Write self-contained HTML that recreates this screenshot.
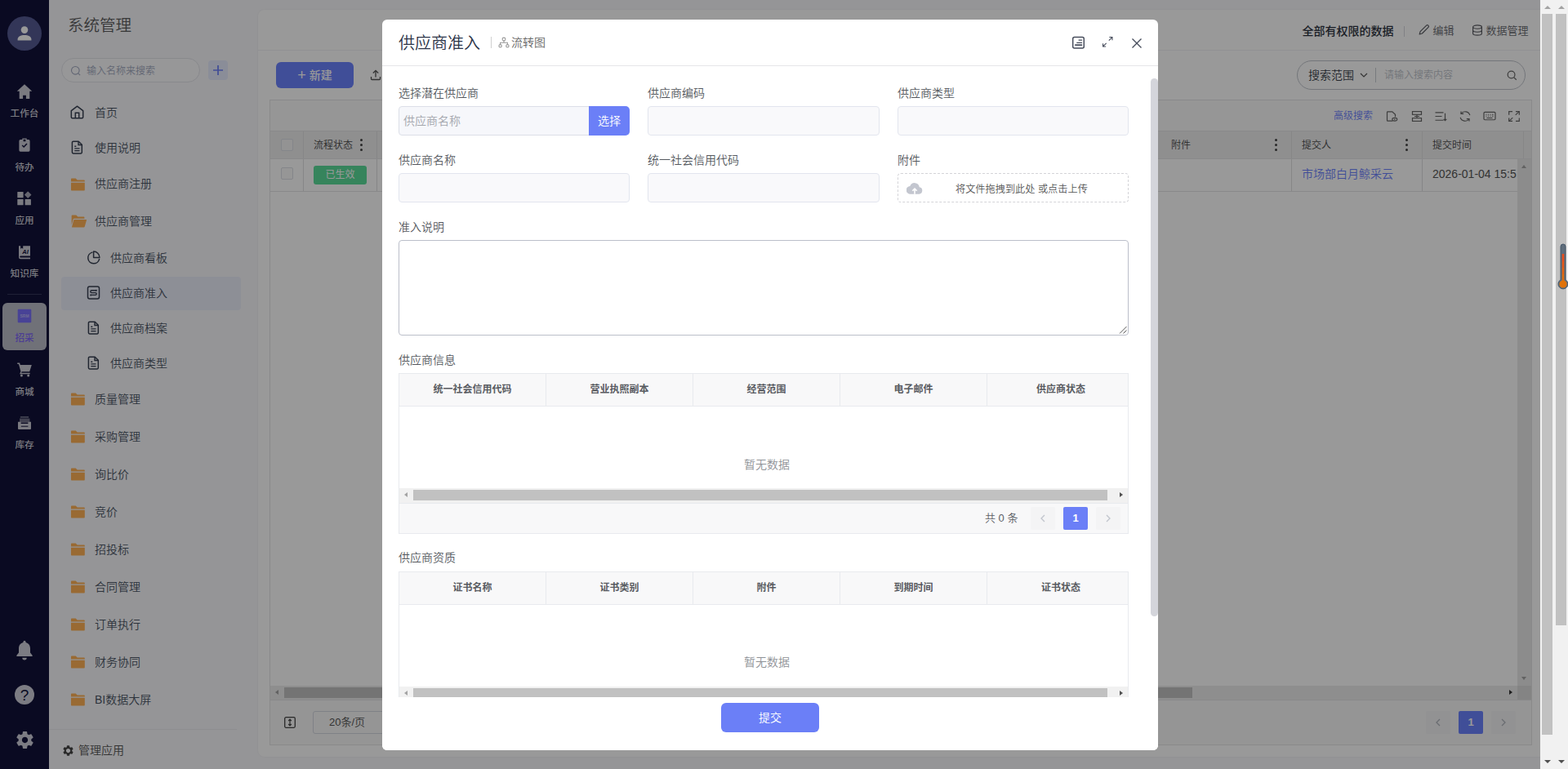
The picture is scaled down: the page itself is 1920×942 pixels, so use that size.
<!DOCTYPE html>
<html lang="zh-CN">
<head>
<meta charset="utf-8">
<title>供应商准入</title>
<style>
*{box-sizing:border-box;margin:0;padding:0}
html,body{width:1920px;height:942px;overflow:hidden;background:#f1f1f1}
body{font-family:"Liberation Sans","Noto Sans CJK SC",sans-serif;font-size:14px;color:#333;position:relative;font-weight:350}
.abs{position:absolute}
svg{display:block}
#page{position:absolute;left:0;top:0;width:1886px;height:942px;background:#f9f9fc;overflow:hidden}
/* rail */
#rail{position:absolute;left:0;top:0;width:60px;height:942px;background:#111239}
.avatar{position:absolute;left:9px;top:20px;width:42px;height:42px;border-radius:50%;background:#555a93}
.ri{position:absolute;left:0;width:60px;text-align:center;color:#cdcdd8;font-size:11.6px;font-weight:500;line-height:14px;white-space:nowrap}
.ri svg{position:absolute;left:20px;top:0}
.ri span{position:absolute;left:0;width:60px;top:29.5px}
/* sidebar */
#side{position:absolute;left:60px;top:0;width:240px;height:942px}
#side h1{position:absolute;left:23px;top:17px;font-size:19.5px;font-weight:350;color:#5c5c5e;line-height:28px}
.sinput{position:absolute;left:15px;top:71px;width:170px;height:30px;border:1px solid #e3e4ea;border-radius:15px;background:#fcfcfe;color:#a3aac0;font-size:12px;line-height:31px;padding-left:30px}
.splus{position:absolute;left:195px;top:74px;width:24px;height:24px;border-radius:4px;background:#e6ebfd}
.mi{position:absolute;left:15px;width:220px;height:41px;line-height:41px;font-size:14px;color:#4b5565;border-radius:4px;white-space:nowrap}
.mi .ic{position:absolute;left:11px;top:11px;width:17px;height:17px}
.mi .tx{position:absolute;left:41px;top:0}
.mi.sub .ic{left:31px}
.mi.sub .tx{left:60px}
.mi.act{background:#eceefb}
/* main */
#card{position:absolute;left:316px;top:12px;width:1600px;height:915px;background:#fff;border-radius:8px;box-shadow:0 0 3px rgba(0,0,0,.06)}
/* overlay */
#mask{position:absolute;left:0;top:0;width:1886px;height:942px;background:rgba(0,0,0,.4)}
/* modal */
#modal{position:absolute;left:468px;top:24px;width:950px;height:895px;background:#fff;border-radius:6px;overflow:hidden}
/* browser scrollbars */
.sb{position:absolute;top:0;width:17px;height:942px;background:#f1f1f1}
.sb .th{position:absolute;left:2px;width:13px;background:#c1c1c1}
.sb .up,.sb .dn{position:absolute;left:4.5px;width:0;height:0;border-left:4px solid transparent;border-right:4px solid transparent}
.sb .up{top:7px;border-bottom:4px solid #a3a3a3}
.sb .dn{bottom:7px;border-top:4px solid #505050}
/* card content: coordinates relative to card (316,12) */
#card .t{position:absolute;white-space:nowrap}
.btn-new{position:absolute;left:22px;top:64px;width:95px;height:32px;border-radius:6px;background:#6c82fd;color:#fff;font-size:14px;font-weight:500;line-height:32px;text-align:center;white-space:nowrap}
.sbox{position:absolute;left:1272px;top:62px;width:280px;height:36px;border:1px solid #c0c4cc;border-radius:18px}
.tbl{position:absolute;left:14px;top:110px;width:1546px;height:791px;border:1px solid #e4e4e6;background:#fff;overflow:hidden}
.tbl .bar{position:absolute;left:0;top:0;width:1544px;height:37px;background:#fbfbfb}
.tbl .hd{position:absolute;left:0;top:37px;width:1544px;height:35px;background:#eeeeef;border-top:1px solid #e4e4e6;border-bottom:1px solid #e4e4e6;font-size:12px;color:#4a4a4a}
.tbl .row{position:absolute;left:0;top:72px;width:1544px;height:40px;border-bottom:1px solid #e4e4e6;background:#fff}
.tbl .vl{position:absolute;top:0;width:1px;height:100%;background:#dfdfe1}
.cb{position:absolute;width:15px;height:15px;border:1px solid #dcdfe6;border-radius:2px;background:#fafafa}
.dots{position:absolute;width:3px;height:15px}
.dots i{position:absolute;left:0;width:3px;height:3px;border-radius:50%;background:#444}
.pg{position:absolute;width:30px;height:28px;border-radius:2px;background:#f4f4f5;text-align:center;line-height:28px;font-size:13px;color:#c0c4cc}
.pg.on{background:#6c82fd;color:#fff;font-weight:700}
/* modal content: coords relative to modal (468,24) */
#modal .lb{position:absolute;left:20px;font-size:14px;line-height:20px;color:#54585e;white-space:nowrap}
#modal .inp{position:absolute;height:36px;border:1px solid #e2e5ee;border-radius:4px;background:#f9f9fb}
.mt{position:absolute;left:20px;width:894px;border:1px solid #e8eaee;background:#fff;overflow:hidden}
.mt .th{position:absolute;left:0;top:0;width:892px;height:40px;background:#f8f8f9;border-bottom:1px solid #e8eaee}
.mt .th span{position:absolute;top:0;width:180px;height:39px;line-height:39px;text-align:center;font-size:12px;font-weight:700;color:#585b61;border-right:1px solid #e8eaee;white-space:nowrap}
.mt .empty{position:absolute;left:0;top:100.5px;width:900px;text-align:center;font-size:14px;line-height:20px;color:#8e9196}
.hs{position:absolute;left:0;width:892px;height:18px;background:#f1f1f1}
.hs .thumb{position:absolute;left:17px;top:2px;width:850px;height:13px;background:#c1c1c1}
.hs .l{position:absolute;left:6px;top:5px;border-top:3.500px solid transparent;border-bottom:3.500px solid transparent;border-right:4px solid #a3a3a3}
.hs .r{position:absolute;left:882px;top:5px;border-top:3.500px solid transparent;border-bottom:3.500px solid transparent;border-left:4px solid #505050}
.mpg{position:absolute;width:30px;height:28px;border-radius:2px;background:#f4f4f5;text-align:center;line-height:28px;font-size:13px}
.mpg.on{background:#6b7ff7;color:#fff;font-weight:700}

</style>
</head>
<body>
<div id="page">
<div id="rail">
<div class="avatar"><svg width="42" height="42" viewBox="0 0 42 42"><circle cx="21" cy="16.6" r="4.3" fill="#fff"/><path d="M12.6 29.6v-1.5c0-3.3 3.8-5.1 8.4-5.1s8.400 1.800 8.400 5.100v1.500z" fill="#fff"/></svg></div>
<div class="ri" style="top:102px"><svg width="20" height="20" viewBox="0 0 20 20"><path d="M10 1.200L0.800 9.700h2.900v9.300h4.400v-4.300h3.800v4.300h4.400V9.700h2.900z" fill="#cbcbd6"/></svg><span>工作台</span></div>
<div class="ri" style="top:168px"><svg width="20" height="20" viewBox="0 0 20 20"><path fill-rule="evenodd" d="M7.300 1.500h5.400v1.600h2.300a1.600 1.600 0 0 1 1.600 1.600v11.400a1.600 1.600 0 0 1-1.600 1.600H5a1.600 1.600 0 0 1-1.600-1.600V4.700A1.600 1.600 0 0 1 5 3.100h2.300zM8.600 2.800v2.500h2.800V2.800zM6.700 10.600l2.500 2.500 4.300-4.700-1.100-1-3.300 3.600-1.400-1.400z" fill="#cbcbd6"/></svg><span>待办</span></div>
<div class="ri" style="top:233px"><svg width="20" height="20" viewBox="0 0 20 20"><g fill="#cbcbd6"><rect x="1.300" y="2" width="7.300" height="7.300" rx=".6"/><rect x="1.300" y="11" width="7.300" height="7.300" rx=".6"/><rect x="10.600" y="11" width="7.300" height="7.300" rx=".6"/><rect x="11.100" y="2.500" width="6.200" height="6.200" rx=".6" transform="rotate(45 14.200 5.600)" fill="#a9a9ba"/></g></svg><span>应用</span></div>
<div class="ri" style="top:298.500px"><svg width="20" height="20" viewBox="0 0 20 20"><path d="M3 2.200h2.200v3.600l1.500-1.100 1.500 1.100V2.200H17v12.300H5.200a1 1 0 0 0 0 2H17v1.700H5a2 2 0 0 1-2-2z" fill="#cbcbd6"/><text x="11" y="12.400" font-size="7.500" font-weight="700" font-style="italic" text-anchor="middle" fill="#111239" font-family="Liberation Sans, sans-serif">AI</text></svg><span>知识库</span></div>
<div class="abs" style="left:9px;top:360px;width:42px;height:1px;background:#34365a"></div>
<div class="abs" style="left:3px;top:371px;width:54px;height:58px;border-radius:6px;background:#bbbcc8"></div>
<div class="ri" style="top:377px;color:#7d66f6"><svg width="20" height="20" viewBox="0 0 20 20"><rect x="1.700" y="1.700" width="16.600" height="16.600" rx="1.200" fill="#786efa"/><text x="10" y="11.700" font-size="5" font-weight="700" text-anchor="middle" fill="#b8b4f5" font-family="Liberation Sans, sans-serif">SRM</text></svg><span>招采</span></div>
<div class="ri" style="top:443px"><svg width="20" height="20" viewBox="0 0 20 20"><path d="M1.200 1.600h2.900l.7 2.400h14l-2.600 8.200H6.700l-.6 1.600h10.600v1.400H4.100l1.300-3.300L2.900 3.100H1.200z" fill="#cbcbd6"/><circle cx="6.400" cy="17" r="1.500" fill="#cbcbd6"/><circle cx="14.700" cy="17" r="1.500" fill="#cbcbd6"/></svg><span>商城</span></div>
<div class="ri" style="top:508px"><svg width="20" height="20" viewBox="0 0 20 20"><g fill="#cbcbd6"><rect x="4.900" y="2.400" width="10.200" height="1.100" opacity=".8"/><rect x="4" y="4.600" width="12.400" height="5.400" opacity=".5"/><path d="M2 8.700h3.600v2.200h8.800V8.700H18v8.400a.9.900 0 0 1-.9.900H2.900a.9.900 0 0 1-.9-.9z"/></g><rect x="5.800" y="13.700" width="8.600" height="1.200" fill="#111239" opacity=".8"/></svg><span>库存</span></div>
<div class="abs" style="left:18px;top:784px"><svg width="24" height="26" viewBox="0 0 24 26"><path d="M12 .8a1.600 1.600 0 0 1 1.600 1.600v.5c3.300.8 5.400 3.600 5.400 7.300v5.300l2.600 3.300v1.300H2.400v-1.300L5 15.500v-5.300c0-3.700 2.100-6.500 5.400-7.300v-.5A1.600 1.600 0 0 1 12 .8zM9.300 21.700h5.400a2.700 2.700 0 0 1-5.400 0z" fill="#cfcfda"/></svg></div>
<div class="abs" style="left:18px;top:839px;width:24px;height:24px;border-radius:50%;background:#cfcfda;color:#111239;font-size:19px;font-weight:400;line-height:25px;text-align:center">?</div>
<div class="abs" style="left:17.500px;top:893.500px"><svg width="25" height="25" viewBox="0 0 24 24"><path d="M19.430 12.980c.040-.320.070-.640.070-.980s-.030-.660-.070-.980l2.110-1.650c.190-.150.240-.420.120-.640l-2-3.460c-.120-.220-.390-.300-.610-.220l-2.490 1c-.520-.400-1.080-.730-1.690-.980l-.380-2.650C14.460 2.180 14.250 2 14 2h-4c-.250 0-.460.180-.490.420l-.380 2.650c-.610.250-1.170.590-1.690.980l-2.490-1c-.230-.090-.490 0-.610.220l-2 3.460c-.130.220-.070.490.12.640l2.110 1.650c-.040.320-.070.650-.070.980s.030.660.070.980l-2.110 1.650c-.190.150-.240.420-.120.640l2 3.460c.120.220.390.300.610.220l2.490-1c.520.400 1.080.730 1.690.980l.380 2.650c.030.240.240.420.490.420h4c.250 0 .460-.180.490-.420l.380-2.650c.610-.250 1.170-.590 1.690-.980l2.490 1c.230.090.490 0 .610-.220l2-3.460c.120-.220.070-.490-.12-.640l-2.110-1.650zM12 15.500c-1.930 0-3.500-1.570-3.500-3.500s1.570-3.500 3.500-3.500 3.500 1.570 3.500 3.500-1.570 3.500-3.500 3.500z" fill="#cfcfda"/></svg></div>

</div>
<div id="side">
<h1>系统管理</h1>
<div class="sinput"><svg class="abs" style="left:10px;top:7.500px" width="14" height="14" viewBox="0 0 14 14"><circle cx="6.300" cy="6.300" r="4.800" fill="none" stroke="#a3aac0" stroke-width="1.100"/><path d="M9.800 9.800l2.300 2.300" stroke="#a3aac0" stroke-width="1.100"/></svg>输入名称来搜索</div>
<div class="splus"><svg width="24" height="24" viewBox="0 0 24 24"><path d="M12 6v12M6 12h12" stroke="#6c7ffa" stroke-width="1.700"/></svg></div>
<div class="mi" style="top:117.5px"><svg class="ic" viewBox="0 0 17 17"><path d="M1.300 6.600L8.500 1.200l7.200 5.400v7.900a1.200 1.200 0 0 1-1.200 1.200H2.500a1.200 1.200 0 0 1-1.200-1.200z" fill="none" stroke="#374052" stroke-width="1.500" stroke-linejoin="round"/><path d="M6.300 15.600V9.200h4.400v6.400" fill="none" stroke="#374052" stroke-width="1.500"/></svg><span class="tx">首页</span></div>
<div class="mi" style="top:160.5px"><svg class="ic" viewBox="0 0 17 17"><path d="M3.700 1.200h6.500l4.100 4.100v9.300a1.300 1.300 0 0 1-1.300 1.300H3.700a1.300 1.300 0 0 1-1.300-1.300V2.500a1.300 1.300 0 0 1 1.300-1.300z" fill="none" stroke="#374052" stroke-width="1.500" stroke-linejoin="round"/><path d="M10 1.400v4.100h4.100" fill="none" stroke="#374052" stroke-width="1.400"/><path d="M5.300 7.200h2M5.300 9.900h6.200M5.300 12.600h6.200" stroke="#374052" stroke-width="1.400"/></svg><span class="tx">使用说明</span></div>
<div class="mi" style="top:205.0px"><svg class="ic" style="width:18px;left:11px;top:11.700px" viewBox="0 0 17 17" preserveAspectRatio="none"><path d="M.9 2.400a.8.800 0 0 1 .8-.8h4.600l1.900 1.900h7.800a.8.800 0 0 1 .8.800v1.300H.9z" fill="#ffb155"/><path d="M.9 6.800h15.900v9a.8.800 0 0 1-.8.800H1.700a.8.800 0 0 1-.8-.8z" fill="#ffb155"/></svg><span class="tx">供应商注册</span></div>
<div class="mi" style="top:251.0px"><svg class="ic" style="width:19px;left:12px" viewBox="0 0 18 17" preserveAspectRatio="none"><path d="M.6 2.400a.8.800 0 0 1 .8-.8h4.600l1.900 1.900h6.800a.8.800 0 0 1 .8.800v1.500H3.600a1.200 1.200 0 0 0-1.150.9L.6 13.500z" fill="#ffb155"/><path d="M4 6.900h13.400a.6.600 0 0 1 .58.760l-2.200 8.200a1 1 0 0 1-.96.740H1.600a.6.600 0 0 1-.58-.76l2-8.200A1 1 0 0 1 4 6.900z" fill="#ffb155"/></svg><span class="tx">供应商管理</span></div>
<div class="mi sub" style="top:295.5px"><svg class="ic" viewBox="0 0 17 17"><path d="M6.900 2.100A7 7 0 1 0 15.600 10.400" fill="none" stroke="#374052" stroke-width="1.500" stroke-linecap="round"/><path d="M8.600 1.100a7.300 7.300 0 0 1 7.300 7.300H8.600z" fill="none" stroke="#374052" stroke-width="1.500" stroke-linejoin="round"/></svg><span class="tx">供应商看板</span></div>
<div class="mi sub act" style="top:339.0px"><svg class="ic" viewBox="0 0 17 17"><rect x="1.500" y="1" width="14" height="15" rx="2.200" fill="none" stroke="#374052" stroke-width="1.500"/><path d="M11.800 5.800H6.200a1.400 1.400 0 0 0 0 2.800h4.600a1.400 1.400 0 0 1 0 2.800H5.200" fill="none" stroke="#374052" stroke-width="1.400" stroke-linecap="round"/><circle cx="11.800" cy="5.800" r="1" fill="#374052"/><circle cx="5.200" cy="11.400" r="1" fill="#374052"/></svg><span class="tx">供应商准入</span></div>
<div class="mi sub" style="top:381.5px"><svg class="ic" viewBox="0 0 17 17"><path d="M3.700 1.200h6.500l4.100 4.100v9.300a1.300 1.300 0 0 1-1.300 1.300H3.700a1.300 1.300 0 0 1-1.300-1.300V2.500a1.300 1.300 0 0 1 1.300-1.300z" fill="none" stroke="#374052" stroke-width="1.500" stroke-linejoin="round"/><path d="M10 1.400v4.100h4.100" fill="none" stroke="#374052" stroke-width="1.400"/><path d="M5.300 7.200h2M5.300 9.900h6.200M5.300 12.600h6.200" stroke="#374052" stroke-width="1.400"/></svg><span class="tx">供应商档案</span></div>
<div class="mi sub" style="top:424.5px"><svg class="ic" viewBox="0 0 17 17"><path d="M3.700 1.200h6.500l4.100 4.100v9.300a1.300 1.300 0 0 1-1.300 1.300H3.700a1.300 1.300 0 0 1-1.300-1.300V2.500a1.300 1.300 0 0 1 1.300-1.300z" fill="none" stroke="#374052" stroke-width="1.500" stroke-linejoin="round"/><path d="M10 1.400v4.100h4.100" fill="none" stroke="#374052" stroke-width="1.400"/><path d="M5.300 7.200h2M5.300 9.900h6.200M5.300 12.600h6.200" stroke="#374052" stroke-width="1.400"/></svg><span class="tx">供应商类型</span></div>
<div class="mi" style="top:468.5px"><svg class="ic" style="width:18px;left:11px;top:11.700px" viewBox="0 0 17 17" preserveAspectRatio="none"><path d="M.9 2.400a.8.800 0 0 1 .8-.8h4.600l1.900 1.900h7.800a.8.800 0 0 1 .8.800v1.300H.9z" fill="#ffb155"/><path d="M.9 6.800h15.900v9a.8.800 0 0 1-.8.800H1.700a.8.800 0 0 1-.8-.8z" fill="#ffb155"/></svg><span class="tx">质量管理</span></div>
<div class="mi" style="top:514.5px"><svg class="ic" style="width:18px;left:11px;top:11.700px" viewBox="0 0 17 17" preserveAspectRatio="none"><path d="M.9 2.400a.8.800 0 0 1 .8-.8h4.600l1.900 1.900h7.800a.8.800 0 0 1 .8.800v1.300H.9z" fill="#ffb155"/><path d="M.9 6.800h15.900v9a.8.800 0 0 1-.8.800H1.700a.8.800 0 0 1-.8-.8z" fill="#ffb155"/></svg><span class="tx">采购管理</span></div>
<div class="mi" style="top:560.5px"><svg class="ic" style="width:18px;left:11px;top:11.700px" viewBox="0 0 17 17" preserveAspectRatio="none"><path d="M.9 2.400a.8.800 0 0 1 .8-.8h4.600l1.900 1.900h7.800a.8.800 0 0 1 .8.800v1.300H.9z" fill="#ffb155"/><path d="M.9 6.800h15.900v9a.8.800 0 0 1-.8.800H1.700a.8.800 0 0 1-.8-.8z" fill="#ffb155"/></svg><span class="tx">询比价</span></div>
<div class="mi" style="top:606.5px"><svg class="ic" style="width:18px;left:11px;top:11.700px" viewBox="0 0 17 17" preserveAspectRatio="none"><path d="M.9 2.400a.8.800 0 0 1 .8-.8h4.600l1.900 1.900h7.800a.8.800 0 0 1 .8.800v1.300H.9z" fill="#ffb155"/><path d="M.9 6.800h15.900v9a.8.800 0 0 1-.8.800H1.700a.8.800 0 0 1-.8-.8z" fill="#ffb155"/></svg><span class="tx">竞价</span></div>
<div class="mi" style="top:652.5px"><svg class="ic" style="width:18px;left:11px;top:11.700px" viewBox="0 0 17 17" preserveAspectRatio="none"><path d="M.9 2.400a.8.800 0 0 1 .8-.8h4.600l1.900 1.900h7.800a.8.800 0 0 1 .8.800v1.300H.9z" fill="#ffb155"/><path d="M.9 6.800h15.900v9a.8.800 0 0 1-.8.800H1.700a.8.800 0 0 1-.8-.8z" fill="#ffb155"/></svg><span class="tx">招投标</span></div>
<div class="mi" style="top:698.5px"><svg class="ic" style="width:18px;left:11px;top:11.700px" viewBox="0 0 17 17" preserveAspectRatio="none"><path d="M.9 2.400a.8.800 0 0 1 .8-.8h4.600l1.900 1.900h7.800a.8.800 0 0 1 .8.800v1.300H.9z" fill="#ffb155"/><path d="M.9 6.800h15.900v9a.8.800 0 0 1-.8.800H1.700a.8.800 0 0 1-.8-.8z" fill="#ffb155"/></svg><span class="tx">合同管理</span></div>
<div class="mi" style="top:744.5px"><svg class="ic" style="width:18px;left:11px;top:11.700px" viewBox="0 0 17 17" preserveAspectRatio="none"><path d="M.9 2.400a.8.800 0 0 1 .8-.8h4.600l1.900 1.900h7.800a.8.800 0 0 1 .8.800v1.300H.9z" fill="#ffb155"/><path d="M.9 6.800h15.900v9a.8.800 0 0 1-.8.800H1.700a.8.800 0 0 1-.8-.8z" fill="#ffb155"/></svg><span class="tx">订单执行</span></div>
<div class="mi" style="top:790.5px"><svg class="ic" style="width:18px;left:11px;top:11.700px" viewBox="0 0 17 17" preserveAspectRatio="none"><path d="M.9 2.400a.8.800 0 0 1 .8-.8h4.600l1.900 1.900h7.800a.8.800 0 0 1 .8.800v1.300H.9z" fill="#ffb155"/><path d="M.9 6.800h15.900v9a.8.800 0 0 1-.8.800H1.700a.8.800 0 0 1-.8-.8z" fill="#ffb155"/></svg><span class="tx">财务协同</span></div>
<div class="mi" style="top:836.5px"><svg class="ic" style="width:18px;left:11px;top:11.700px" viewBox="0 0 17 17" preserveAspectRatio="none"><path d="M.9 2.400a.8.800 0 0 1 .8-.8h4.600l1.900 1.900h7.800a.8.800 0 0 1 .8.800v1.300H.9z" fill="#ffb155"/><path d="M.9 6.800h15.900v9a.8.800 0 0 1-.8.800H1.700a.8.800 0 0 1-.8-.8z" fill="#ffb155"/></svg><span class="tx">BI数据大屏</span></div>
<div class="abs" style="left:0;top:893px;width:230px;height:1px;background:#ebebf0"></div>
<div class="abs" style="left:16px;top:909px;width:200px;height:20px;line-height:20px;font-size:14px;color:#555;white-space:nowrap"><svg class="abs" style="left:0;top:2.500px" width="15" height="15" viewBox="0 0 24 24"><path d="M19.430 12.980c.040-.320.070-.640.070-.980s-.030-.660-.070-.980l2.110-1.650c.190-.150.240-.420.120-.640l-2-3.460c-.120-.220-.390-.300-.610-.220l-2.490 1c-.520-.400-1.080-.730-1.690-.980l-.380-2.650C14.460 2.180 14.250 2 14 2h-4c-.250 0-.460.180-.490.420l-.380 2.650c-.610.250-1.170.590-1.690.980l-2.490-1c-.230-.090-.490 0-.610.220l-2 3.460c-.130.220-.070.490.12.640l2.110 1.650c-.040.320-.070.650-.070.980s.030.660.070.980l-2.110 1.650c-.190.150-.240.420-.120.640l2 3.460c.120.220.390.300.610.220l2.490-1c.520.400 1.080.730 1.690.980l.380 2.650c.030.240.240.420.490.420h4c.250 0 .460-.180.490-.420l.380-2.650c.610-.250 1.170-.590 1.690-.980l2.490 1c.230.090.490 0 .610-.220l2-3.460c.120-.220.070-.490-.12-.640l-2.110-1.650zM12 16.200c-2.320 0-4.200-1.880-4.200-4.200s1.880-4.200 4.200-4.200 4.200 1.880 4.200 4.200-1.880 4.200-4.200 4.200z" fill="#444"/></svg><span class="abs" style="left:20px;top:0">管理应用</span></div>
</div>
<div id="card">
<div class="abs" style="left:0;top:49px;width:1600px;height:1px;background:#f0f1f5"></div>
<span class="t" style="left:1278.500px;top:15.500px;line-height:20px;font-size:14px;font-weight:500;color:#2d3340">全部有权限的数据</span>
<div class="abs" style="left:1403px;top:20px;width:1px;height:13px;background:#d5d7dc"></div>
<svg class="abs" style="left:1420px;top:17px" width="15" height="15" viewBox="0 0 15 15"><path d="M2.200 13l.9-3.300 7.600-7.600a1.500 1.500 0 0 1 2.100 0l.2.200a1.500 1.500 0 0 1 0 2.100l-7.600 7.600z" fill="none" stroke="#5c5e64" stroke-width="1.200" stroke-linejoin="round"/></svg>
<span class="t" style="left:1438.500px;top:15.700px;line-height:20px;font-size:13px;color:#66686e">编辑</span>
<svg class="abs" style="left:1486px;top:17.500px" width="14" height="14" viewBox="0 0 14 15" preserveAspectRatio="none"><ellipse cx="7" cy="3.300" rx="5.400" ry="2.300" fill="none" stroke="#5c5e64" stroke-width="1.200"/><path d="M1.600 3.300v8.400c0 1.300 2.400 2.300 5.400 2.300s5.400-1 5.400-2.300V3.300M1.600 7.600c0 1.300 2.400 2.300 5.400 2.300s5.400-1 5.400-2.300" fill="none" stroke="#5c5e64" stroke-width="1.200"/></svg>
<span class="t" style="left:1503.500px;top:15.700px;line-height:20px;font-size:13px;color:#66686e">数据管理</span>
<div class="btn-new"><span style="font-size:18px;vertical-align:-1px;font-weight:400">+</span> 新建</div>
<svg class="abs" style="left:137px;top:73px" width="14" height="14" viewBox="0 0 14 14"><path d="M7 9.500V1.500M3.800 4.500L7 1.300l3.200 3.200M1.500 9v2.500a1 1 0 0 0 1 1h9a1 1 0 0 0 1-1V9" fill="none" stroke="#555" stroke-width="1.300"/></svg>
<div class="sbox">
<span class="abs" style="left:13px;top:7px;line-height:20px;font-size:14px;color:#3a3f4a;white-space:nowrap">搜索范围</span>
<svg class="abs" style="left:76px;top:13px" width="10" height="8" viewBox="0 0 10 8"><path d="M1 2l4 4 4-4" fill="none" stroke="#555" stroke-width="1.200"/></svg>
<div class="abs" style="left:95px;top:8px;width:1px;height:18px;background:#c8cbd2"></div>
<span class="abs" style="left:106px;top:8px;line-height:18px;font-size:12px;color:#c0c4cc;white-space:nowrap">请输入搜索内容</span>
<svg class="abs" style="left:256px;top:10.500px" width="13" height="13" viewBox="0 0 14 14"><circle cx="6" cy="6" r="4.700" fill="none" stroke="#666" stroke-width="1.300"/><path d="M9.500 9.500l3.200 3.200" stroke="#666" stroke-width="1.300"/></svg>
</div>
<div class="tbl">
<div class="bar">
<span class="abs" style="left:1302px;top:10px;line-height:18px;font-size:12px;color:#6c82fd;white-space:nowrap">高级搜索</span>
<svg class="abs" style="left:1365px;top:11.500px" width="16" height="15" viewBox="0 0 16 16" preserveAspectRatio="none"><path d="M9.500 14H3.200a.7.700 0 0 1-.7-.7V2.700a.7.700 0 0 1 .7-.7h5.600l3.700 3.700v3" fill="none" stroke="#666" stroke-width="1.200"/><ellipse cx="11.800" cy="12" rx="3" ry="2" fill="none" stroke="#666" stroke-width="1.100"/><circle cx="11.800" cy="12" r=".8" fill="#666"/></svg>
<svg class="abs" style="left:1396px;top:11.500px" width="16" height="15" viewBox="0 0 16 16" preserveAspectRatio="none"><rect x="2.500" y="1.700" width="11" height="4" fill="none" stroke="#666" stroke-width="1.200"/><rect x="2.500" y="10.300" width="11" height="4" fill="none" stroke="#666" stroke-width="1.200"/><path d="M8 5.700v4.600M5 8h6" stroke="#666" stroke-width="1.200"/></svg>
<svg class="abs" style="left:1425px;top:11.500px" width="16" height="15" viewBox="0 0 16 16" preserveAspectRatio="none"><path d="M1.500 3h10M1.500 8h8M1.500 13h10M13.500 4v9.500M11.700 11.700l1.800 1.800 1.800-1.800" fill="none" stroke="#666" stroke-width="1.200"/></svg>
<svg class="abs" style="left:1455px;top:11.500px" width="16" height="15" viewBox="0 0 16 16" preserveAspectRatio="none"><path d="M13.800 6.500A6 6 0 0 0 3 4.500M2.200 9.500A6 6 0 0 0 13 11.500" fill="none" stroke="#666" stroke-width="1.200"/><path d="M3 1.500v3.200h3.200M13 14.500v-3.200H9.800" fill="none" stroke="#666" stroke-width="1.200"/></svg>
<svg class="abs" style="left:1485px;top:11.500px" width="16" height="15" viewBox="0 0 16 16" preserveAspectRatio="none"><rect x="1" y="2.500" width="14" height="10" rx="1.200" fill="none" stroke="#666" stroke-width="1.200"/><path d="M3.500 5.500h1M6 5.500h1M8.500 5.500h1M11 5.500h1.500M3.500 7.700h1M6 7.700h1M8.500 7.700h1M11 7.700h1.500M4.500 10.200h7" stroke="#666" stroke-width="1.100"/></svg>
<svg class="abs" style="left:1515px;top:11.500px" width="16" height="15" viewBox="0 0 16 16" preserveAspectRatio="none"><path d="M1.700 6V1.700H6M10 1.700h4.300V6M14.300 10v4.300H10M6 14.300H1.700V10" fill="none" stroke="#666" stroke-width="1.200"/><path d="M9.700 6.300l4-4M6.300 9.700l-4 4" stroke="#666" stroke-width="1.100"/></svg>
</div>
<div class="hd">
<div class="vl" style="left:40px"></div><div class="vl" style="left:130px"></div><div class="vl" style="left:1250px"></div><div class="vl" style="left:1410px"></div><div class="vl" style="left:1534px"></div>
<div class="cb" style="left:13px;top:9px;background:#f5f5f5"></div>
<span class="abs" style="left:53px;top:8px;line-height:18px;white-space:nowrap">流程状态</span>
<div class="dots" style="left:110px;top:9px"><i style="top:0"></i><i style="top:6px"></i><i style="top:12px"></i></div>
<span class="abs" style="left:1103px;top:8px;line-height:18px;white-space:nowrap">附件</span>
<div class="dots" style="left:1230px;top:9px"><i style="top:0"></i><i style="top:6px"></i><i style="top:12px"></i></div>
<span class="abs" style="left:1263px;top:8px;line-height:18px;white-space:nowrap">提交人</span>
<div class="dots" style="left:1390px;top:9px"><i style="top:0"></i><i style="top:6px"></i><i style="top:12px"></i></div>
<span class="abs" style="left:1423px;top:8px;line-height:18px;white-space:nowrap">提交时间</span>
</div>
<div class="row">
<div class="vl" style="left:40px"></div><div class="vl" style="left:130px"></div><div class="vl" style="left:1250px"></div><div class="vl" style="left:1410px"></div>
<div class="cb" style="left:13px;top:10px"></div>
<div class="abs" style="left:53px;top:8px;width:65px;height:23px;border-radius:3px;background:#5bdc9a;color:#fff;font-size:12px;font-weight:400;line-height:23px;text-align:center">已生效</div>
<span class="abs" style="left:1263px;top:8px;line-height:20px;font-size:14px;color:#6c82fd;white-space:nowrap">市场部白月鲸采云</span>
<span class="abs" style="left:1423px;top:8px;line-height:20px;font-size:14px;color:#555;white-space:nowrap">2026-01-04 15:5</span>
</div>
<!-- vertical scrollbar -->
<div class="abs" style="left:1527px;top:72px;width:17px;height:645px;background:#e9e9e9"><i class="abs" style="left:5px;top:7px;border-left:3.500px solid transparent;border-right:3.500px solid transparent;border-bottom:4px solid #a3a3a3"></i><i class="abs" style="left:5px;bottom:7px;border-left:3.500px solid transparent;border-right:3.500px solid transparent;border-top:4px solid #a3a3a3"></i></div>
<!-- horizontal scrollbar -->
<div class="abs" style="left:0;top:717px;width:1544px;height:17px;background:#ededed"><i class="abs" style="left:6px;top:5px;border-top:3.500px solid transparent;border-bottom:3.500px solid transparent;border-right:4px solid #a3a3a3"></i><div class="abs" style="left:17px;top:2px;width:1112px;height:13px;background:#c1c1c1"></div><i class="abs" style="left:1517px;top:5px;border-top:3.500px solid transparent;border-bottom:3.500px solid transparent;border-left:4px solid #333"></i><div class="abs" style="left:1527px;top:0;width:17px;height:17px;background:#dcdcdc"></div></div>
<!-- footer -->
<div class="abs" style="left:0;top:734px;width:1544px;height:55px;background:#f8f8f8;border-top:1px solid #e4e4e6">
<svg class="abs" style="left:17px;top:20px" width="14" height="14" viewBox="0 0 14 14"><rect x=".7" y=".7" width="12.600" height="12.600" rx="1.500" fill="none" stroke="#444" stroke-width="1.300"/><path d="M7 3.200v7.600M5.200 5L7 3.200 8.800 5M5.200 9L7 10.800 8.800 9" fill="none" stroke="#444" stroke-width="1.200"/></svg>
<div class="abs" style="left:52px;top:13px;width:110px;height:28px;border:1px solid #d4d7e0;border-radius:3px;font-size:13px;color:#555;line-height:26px;padding-left:19px;white-space:nowrap">20条/页</div>
<div class="pg" style="left:1415px;top:13px"><svg style="margin:9px auto 0" width="8" height="10" viewBox="0 0 8 10"><path d="M6 1L2 5l4 4" fill="none" stroke="#b0b4bd" stroke-width="1.300"/></svg></div>
<div class="pg on" style="left:1455px;top:13px">1</div>
<div class="pg" style="left:1495px;top:13px"><svg style="margin:9px auto 0" width="8" height="10" viewBox="0 0 8 10"><path d="M2 1l4 4-4 4" fill="none" stroke="#b0b4bd" stroke-width="1.300"/></svg></div>
</div>
</div>

</div>
<div id="mask"></div>
<div id="modal">
<div class="abs" style="left:0;top:0;width:950px;height:57px;border-bottom:1px solid #e6e6e8"></div>
<span class="abs" style="left:20px;top:15px;font-size:20px;line-height:28px;color:#2b3347;white-space:nowrap">供应商准入</span>
<div class="abs" style="left:133px;top:21px;width:1px;height:14px;background:#d0d0d0"></div>
<svg class="abs" style="left:142px;top:21px" width="14" height="14" viewBox="0 0 14 14"><circle cx="7" cy="3" r="1.900" fill="none" stroke="#999" stroke-width="1.100"/><circle cx="2.600" cy="11.300" r="1.700" fill="none" stroke="#999" stroke-width="1.100"/><circle cx="11.400" cy="11.300" r="1.700" fill="none" stroke="#999" stroke-width="1.100"/><path d="M7 4.900v2.300M2.600 9.600V7.200h8.800v2.400" fill="none" stroke="#999" stroke-width="1.100"/></svg>
<span class="abs" style="left:158px;top:18px;font-size:14px;line-height:20px;color:#666;white-space:nowrap">流转图</span>
<svg class="abs" style="left:844px;top:20px" width="17" height="17" viewBox="0 0 17 17"><rect x="1.700" y="1.500" width="13.600" height="13.600" rx="2" fill="none" stroke="#474d5c" stroke-width="1.500"/><path d="M8.600 5.200h4.500M6.300 8.300h6.800" stroke="#474d5c" stroke-width="1.200"/><path d="M4.200 11.200h8.900" stroke="#474d5c" stroke-width="1.700"/></svg>
<svg class="abs" style="left:880.700px;top:19.900px" width="14.500" height="14.500" viewBox="0 0 16 16"><path d="M9.700 6.300l4.600-4.600M10.300 1.700h4v4M6.300 9.700l-4.600 4.600M1.700 10.300v4h4" fill="none" stroke="#474d5c" stroke-width="1.200"/></svg>
<svg class="abs" style="left:917px;top:22px" width="14" height="14" viewBox="0 0 14 14"><path d="M1.500 1.500l11 11M12.500 1.500l-11 11" stroke="#474d5c" stroke-width="1.400"/></svg>

<span class="lb" style="top:79.5px">选择潜在供应商</span>
<span class="lb" style="top:79.5px;left:325px">供应商编码</span>
<span class="lb" style="top:79.5px;left:631px">供应商类型</span>
<div class="inp" style="left:20px;top:106px;width:234px;border-radius:4px 0 0 4px;background:#f6f7fb;border-color:#dcdfe8"><span class="abs" style="left:5px;top:7px;line-height:20px;font-size:14px;color:#a2a5ac;white-space:nowrap">供应商名称</span></div>
<div class="abs" style="left:253px;top:106px;width:50px;height:36px;border-radius:0 5px 5px 0;background:#6b7ff7;color:#fff;font-size:14px;line-height:36px;text-align:center">选择</div>
<div class="inp" style="left:325px;top:106px;width:284px"></div>
<div class="inp" style="left:631px;top:106px;width:283px"></div>

<span class="lb" style="top:161.5px">供应商名称</span>
<span class="lb" style="top:161.5px;left:325px">统一社会信用代码</span>
<span class="lb" style="top:161.5px;left:631px">附件</span>
<div class="inp" style="left:20px;top:188px;width:283px"></div>
<div class="inp" style="left:325px;top:188px;width:284px"></div>
<div class="abs" style="left:631px;top:188px;width:283px;height:36px;border:1px dashed #d4d4d8;border-radius:4px">
<svg class="abs" style="left:10px;top:10px" width="20" height="16" viewBox="0 0 20 16"><path d="M15.800 6.200A6 6 0 0 0 4.300 4.900 4.900 4.900 0 0 0 5 14.700h10.400a4.300 4.300 0 0 0 .4-8.500z" fill="#c3c6cf"/><path d="M10 14.700V8.500M7.300 10.800L10 8.100l2.700 2.700" fill="none" stroke="#fff" stroke-width="1.600"/></svg>
<span class="abs" style="left:70px;top:10px;line-height:18px;font-size:12.200px;color:#555;white-space:nowrap">将文件拖拽到此处 或点击上传</span>
</div>

<span class="lb" style="top:243.5px">准入说明</span>
<div class="abs" style="left:20px;top:270px;width:894px;height:117px;border:1px solid #bbbfca;border-radius:4px;background:#fff"><svg class="abs" style="right:1px;bottom:1px" width="10" height="10" viewBox="0 0 10 10"><path d="M9.500 1L1 9.500M9.500 5.500l-4 4" stroke="#555" stroke-width="1"/></svg></div>

<span class="lb" style="top:406.5px">供应商信息</span>
<div class="mt" style="top:433px;height:197px">
<div class="th"><span style="left:0">统一社会信用代码</span><span style="left:180px">营业执照副本</span><span style="left:360px">经营范围</span><span style="left:540px">电子邮件</span><span style="left:720px;border-right:0">供应商状态</span></div>
<div class="empty">暂无数据</div>
<div class="hs" style="top:140px"><i class="l"></i><div class="thumb"></div><i class="r"></i></div>
<div class="abs" style="left:0;top:158px;width:892px;height:38px;background:#f8f8f9;border-top:1px solid #e8eaee">
<span class="abs" style="left:717px;top:7.600px;line-height:20px;font-size:13px;color:#5c6066;white-space:nowrap">共 0 条</span>
<div class="mpg" style="left:773px;top:4px"><svg style="margin:9px auto 0" width="8" height="10" viewBox="0 0 8 10"><path d="M6 1L2 5l4 4" fill="none" stroke="#c0c4cc" stroke-width="1.300"/></svg></div>
<div class="mpg on" style="left:813px;top:4px">1</div>
<div class="mpg" style="left:853px;top:4px"><svg style="margin:9px auto 0" width="8" height="10" viewBox="0 0 8 10"><path d="M2 1l4 4-4 4" fill="none" stroke="#c0c4cc" stroke-width="1.300"/></svg></div>
</div>
</div>

<span class="lb" style="top:649px">供应商资质</span>
<div class="mt" style="top:676px;height:155px;border-bottom:0">
<div class="th"><span style="left:0">证书名称</span><span style="left:180px">证书类别</span><span style="left:360px">附件</span><span style="left:540px">到期时间</span><span style="left:720px;border-right:0">证书状态</span></div>
<div class="empty" style="top:99.500px">暂无数据</div>
<div class="hs" style="top:140px"><i class="l"></i><div class="thumb"></div><i class="r"></i></div>
</div>
<div class="abs" style="left:0;top:830px;width:950px;height:65px;background:#fff"></div>
<div class="abs" style="left:415px;top:837px;width:120px;height:36px;border-radius:6px;background:#6b7ff7;color:#fff;font-size:14px;line-height:36px;text-align:center">提交</div>
<div class="abs" style="left:941px;top:72px;width:9px;height:659px;border-radius:4.500px;background:#d4d5db"></div>

</div>
</div>
<div class="sb" style="left:1886px"><i class="up"></i><div class="th" style="top:17px;height:883px"></div><i class="dn"></i></div>
<div class="sb" style="left:1903px"><i class="up"></i><div class="th" style="top:17px;height:749px"></div><i class="dn"></i></div>
<svg class="abs" style="left:1906px;top:297px" width="14" height="60" viewBox="0 0 14 60"><path d="M5 5a3 3 0 0 1 6 0v40.700a6 6 0 1 1-6 0z" fill="#5f6d7b" stroke="#435769" stroke-width="1"/><rect x="6.700" y="14" width="2.600" height="9" fill="#e84c1b"/><rect x="6.700" y="23" width="2.600" height="8" fill="#e65616"/><rect x="6.700" y="31" width="2.600" height="8" fill="#e36210"/><rect x="6.700" y="39" width="2.600" height="8" fill="#e16c0c"/><circle cx="8" cy="51" r="4.600" fill="#e0730a"/></svg>
</body>
</html>
